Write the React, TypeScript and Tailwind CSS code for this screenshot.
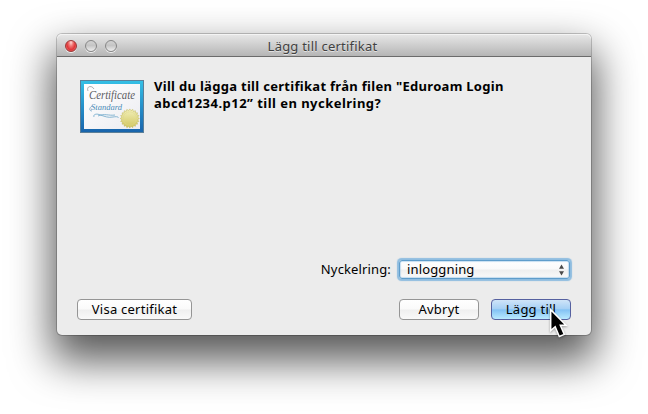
import React from 'react';

function CertificateIcon() {
  const teeth = Array.from({ length: 40 }, (_, i) => {
    const a = (i * Math.PI) / 20;
    const r = i % 2 ? 7.9 : 9.6;
    return `${(49.8 + r * Math.cos(a)).toFixed(2)},${(38.5 + r * Math.sin(a)).toFixed(2)}`;
  }).join(' ');
  return (
    <svg width="64" height="53" viewBox="0 0 64 53" className="block shrink-0">
      <defs>
        <linearGradient id="frame" x1="0" y1="0" x2="0" y2="1">
          <stop offset="0" stopColor="#35c0e6" />
          <stop offset="0.5" stopColor="#2590ca" />
          <stop offset="1" stopColor="#1863ab" />
        </linearGradient>
        <linearGradient id="paper" x1="0" y1="0" x2="1" y2="1">
          <stop offset="0" stopColor="#ffffff" />
          <stop offset="1" stopColor="#ececf1" />
        </linearGradient>
        <linearGradient id="seal" x1="0" y1="0" x2="0" y2="1">
          <stop offset="0" stopColor="#f4f1bd" />
          <stop offset="1" stopColor="#cfc55c" />
        </linearGradient>
      </defs>
      <rect x="0.5" y="0.5" width="63" height="52" fill="url(#frame)" stroke="#5b7f98" />
      <rect x="4" y="4" width="56" height="45" fill="url(#paper)" />
      <text x="9" y="18.8" fontSize="12" fontStyle="italic" fill="#5c5c62" textLength="46" lengthAdjust="spacingAndGlyphs" className="font-['Liberation_Serif',serif]">Certificate</text>
      <path d="M14 9C12 5 6 6 8 11" fill="none" stroke="#77777c" strokeWidth="0.6" />
      <text x="11" y="30.3" fontSize="9" fontStyle="italic" fill="#4b8cb8" textLength="31" lengthAdjust="spacingAndGlyphs" className="font-['Liberation_Serif',serif]">Standard</text>
      <path d="M12 26C9 28 9 31 12 31" fill="none" stroke="#4b8cb8" strokeWidth="0.6" />
      <path d="M14 37C13 34.5 16 33.5 19 34.5C25 36.5 28 38 33 37C36 36.5 39 36.5 38 38M18 36C24 33 29 36 35 35" fill="none" stroke="#6ba6c9" strokeWidth="0.8" />
      <polygon points={teeth} fill="url(#seal)" stroke="#beb450" strokeWidth="0.5" />
      <circle cx="49.8" cy="38.5" r="6.7" fill="none" stroke="#dcd68a" strokeWidth="0.5" />
    </svg>
  );
}

function Light({ red = false }: { red?: boolean }) {
  return (
    <span
      className={
        red
          ? 'block size-3 rounded-full border border-[#9c3938] bg-[radial-gradient(ellipse_at_50%_15%,#ffd9d6_0%,#f17774_30%,#df3538_60%,#ff8c86_100%)] shadow-[0_1px_0_#eeeeee]'
          : 'block size-3 rounded-full border border-[#868686] bg-[linear-gradient(#d2d2d2,#c5c5c5_45%,#eeeeee)] shadow-[0_1px_0_#eeeeee]'
      }
    />
  );
}

const buttonBase =
  'flex h-[21px] items-center justify-center rounded-[4px] border whitespace-nowrap text-black pb-px tracking-[0.24px]';
const plainButton =
  ' border-[#959595] bg-[linear-gradient(#ffffff,#fafafa_48%,#efefef_52%,#f9f9f9)]';

export default function App() {
  return (
    <div className="h-[414px] w-[648px] overflow-hidden bg-white pt-[34px] pl-[57px] font-['Noto_Sans','Open_Sans',sans-serif] text-[13px] leading-[17px] text-black">
      <div className="relative flex h-[301px] w-[534px] flex-col rounded-[5px] bg-[#ececec] shadow-[0_0_0_1px_rgba(0,0,0,0.2),0_21px_42px_5px_rgba(0,0,0,0.65)]">
        <header className="grid h-[23px] shrink-0 grid-cols-[1fr_auto_1fr] items-center rounded-t-[5px] border-b border-[#6b6b6b] bg-[linear-gradient(#e8e8e8,#b5b5b5)] px-2 shadow-[inset_0_1px_0_#f4f4f4]">
          <div className="flex gap-2 pt-px">
            <Light red />
            <Light />
            <Light />
          </div>
          <h1 className="-ml-[3px] pt-[3px] tracking-[0.22px] text-[#414141] [text-shadow:0_1px_0_#e2e2e2]">Lägg till certifikat</h1>
          <span />
        </header>

        <main className="flex flex-1 flex-col">
          <div className="flex gap-[10px] pt-[23px] pl-[23px]">
            <CertificateIcon />
            <p className="-mt-[2px] font-bold whitespace-nowrap">
              <span className="block tracking-[0.3px]">Vill du lägga till certifikat från filen "Eduroam Login</span>
              <span className="block tracking-[0.47px]">abcd1234.p12” till en nyckelring?</span>
            </p>
          </div>

          <div className="mt-auto flex items-center justify-end gap-[8px] pr-[21px]">
            <span className="tracking-[0.14px]">Nyckelring:</span>
            <div className="flex h-[19px] w-[171px] items-center justify-between rounded-[3px] border border-[#5f9dcb] bg-[linear-gradient(#ffffff,#fafafa_48%,#efefef_52%,#fafafa)] pr-[4px] pl-[7px] shadow-[0_0_1px_1.5px_#8fbde0,inset_0_0_1px_0.5px_#9cc6e6]">
              <span className="tracking-[0.15px]">inloggning</span>
              <svg width="7" height="12" viewBox="0 0 7 12">
                <path d="M3.5 0.5L6 4.8H1ZM3.5 11.5L6 7.2H1Z" fill="#4a4a4a" />
              </svg>
            </div>
          </div>

          <div className="mt-[20px] mb-[15px] flex pr-[20px] pl-[20px]">
            <button className={buttonBase + plainButton + ' w-[115px]'}>Visa certifikat</button>
            <button className={buttonBase + plainButton + ' ml-auto w-[80px]'}>Avbryt</button>
            <button
              className={
                buttonBase +
                ' ml-[12px] w-[80px] border-[#5661a0] bg-[linear-gradient(#cfe4f8,#a6d0f5_46%,#83c2f4_52%,#b9eaff)]'
              }
            >
              Lägg till
            </button>
          </div>
        </main>

        <svg
          className="absolute top-[273px] left-[491px] drop-shadow-[0_1px_1px_rgba(0,0,0,0.35)]"
          width="22"
          height="32"
          viewBox="0 0 22 32"
        >
          <path d="M2.7 2.7V23.6L7.2 19.8L11.3 29.5L16.3 27.4L12.3 18.2H18Z" fill="#000" stroke="#fff" strokeWidth="1.5" />
        </svg>
      </div>
    </div>
  );
}
